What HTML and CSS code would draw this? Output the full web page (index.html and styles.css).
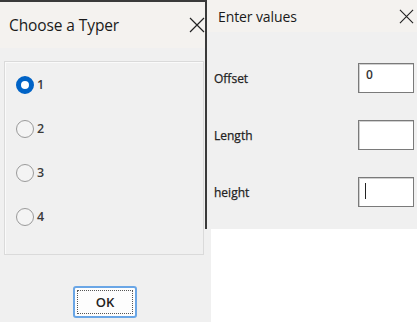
FILE: index.html
```html
<!DOCTYPE html>
<html>
<head>
<meta charset="utf-8">
<link rel="stylesheet" href="styles.css">
</head>
<body>
<div class="desktop">
  <div class="win win-left">
    <div class="titlebar tb-left">
      <span class="title">Choose a Typer</span>
      <svg class="close" width="16" height="16" viewBox="0 0 16 16"><path d="M1 1L15 15M15 1L1 15" stroke="#222" stroke-width="1.2" fill="none"/></svg>
    </div>
    <div class="body-left">
      <div class="group">
        <label class="radio-row"><span class="radio checked"></span><span class="rlabel">1</span></label>
        <label class="radio-row"><span class="radio"></span><span class="rlabel">2</span></label>
        <label class="radio-row"><span class="radio"></span><span class="rlabel">3</span></label>
        <label class="radio-row"><span class="radio"></span><span class="rlabel">4</span></label>
      </div>
      <div class="btn-row"><button class="ok"><span class="focus">OK</span></button></div>
    </div>
  </div>
  <div class="win win-right">
    <div class="titlebar tb-right">
      <span class="title title-r">Enter values</span>
      <svg class="close" width="15" height="15" viewBox="0 0 16 16"><path d="M1 1L15 15M15 1L1 15" stroke="#222" stroke-width="1.2" fill="none"/></svg>
    </div>
    <div class="body-right">
      <div class="field"><span class="flabel">Offset</span><span class="input">0</span></div>
      <div class="field"><span class="flabel">Length</span><span class="input"></span></div>
      <div class="field"><span class="flabel">height</span><span class="input"><span class="caret"></span></span></div>
    </div>
  </div>
</div>
</body>
</html>
```
FILE: styles.css
```css
html, body { margin: 0; padding: 0; background: #ffffff; }
body { width: 417px; height: 322px; overflow: hidden; font-family: "Open Sans", "Noto Sans", sans-serif; }
.desktop { position: relative; width: 417px; height: 322px; }
.win { position: absolute; box-sizing: border-box; background: #f0f0f0; }
.win-left { left: 0; top: 0; width: 211px; height: 322px; border-top: 2px solid #3a3a3a; display: flex; flex-direction: column; }
.win-right { left: 205px; top: 0; width: 212px; height: 229px; border-left: 2px solid #3a3a3a; display: flex; flex-direction: column; }
.titlebar { display: flex; align-items: center; justify-content: space-between; background: #f4f2ef; }
.tb-left { height: 46px; padding: 0 6px 0 9px; }
.tb-right { height: 32px; padding: 0 3px 0 11px; }
.title { font-size: 15.5px; color: #1a1a1a; letter-spacing: -0.1px; }
.title-r { font-size: 14px; }
.body-left { flex: 1; display: flex; flex-direction: column; padding: 13px 7px 0 4px; }
.group { height: 194px; box-sizing: border-box; border: 1px solid #dadada; box-shadow: inset 1px 1px 0 #fafafa; padding: 13px 0 0 11px; display: flex; flex-direction: column; gap: 25px; }
.radio-row { display: flex; align-items: center; height: 19px; gap: 3px; }
.radio { width: 18px; height: 18px; border-radius: 50%; border: 1.5px solid #9a9a9a; background: #f4f4f4; box-sizing: border-box; }
.radio.checked { border: 5px solid #0063c6; background: #ffffff; }
.rlabel { font-size: 12.5px; font-weight: 600; color: #3a3a3a; }
.btn-row { display: flex; justify-content: center; padding-top: 31px; padding-left: 2px; }
.ok { width: 64px; height: 32px; box-sizing: border-box; border: 2px solid #6aa6e6; border-radius: 3px; background: #fdfdfd; padding: 2px; font-family: inherit; }
.focus { display: flex; width: 100%; height: 100%; box-sizing: border-box; border: 1px dotted #555; align-items: center; justify-content: center; font-size: 13px; font-weight: 600; color: #222; }
.body-right { flex: 1; display: flex; flex-direction: column; padding: 31px 3px 0 7px; gap: 27px; }
.field { display: flex; align-items: center; justify-content: space-between; height: 30px; }
.flabel { font-size: 12px; font-weight: 400; color: #222; -webkit-text-stroke: 0.25px #222; }
.input { width: 56px; height: 30px; box-sizing: border-box; border: 1px solid #7a7a7a; background: #fff; box-shadow: inset 1px 1px 0 #d0d0d0; font-size: 12px; font-weight: 600; color: #333; padding: 2px 0 0 7px; display: flex; align-items: flex-start; }
.caret { display: block; width: 1px; height: 16px; margin-top: 3px; margin-left: -1px; background: #222; }
```
